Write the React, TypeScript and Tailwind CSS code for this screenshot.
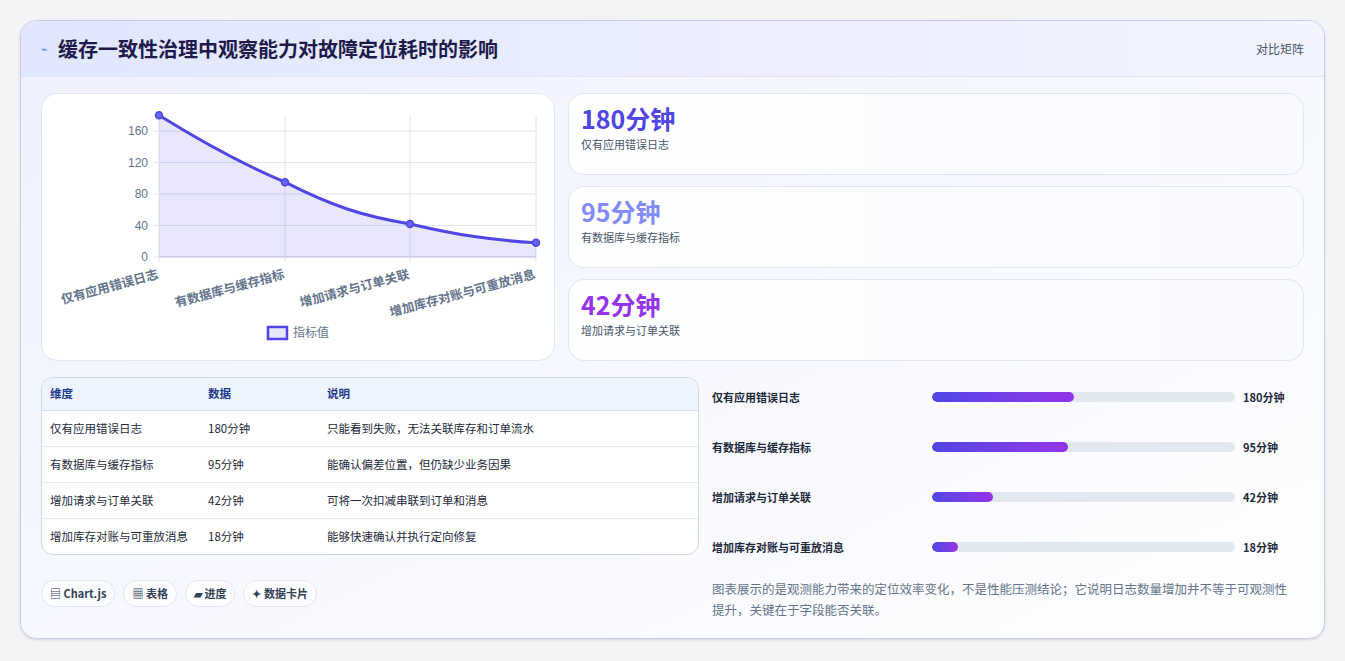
import React from "react";

const rows = [
  { k: "仅有应用错误日志", v: 180, d: "只能看到失败，无法关联库存和订单流水", w: 47 },
  { k: "有数据库与缓存指标", v: 95, d: "能确认偏差位置，但仍缺少业务因果", w: 45 },
  { k: "增加请求与订单关联", v: 42, d: "可将一次扣减串联到订单和消息", w: 20 },
  { k: "增加库存对账与可重放消息", v: 18, d: "能够快速确认并执行定向修复", w: 8.5 },
];

function Chart() {
  const xs = [117, 243, 368, 494];
  const y = (v: number) => 163 - v * 0.7875;
  const pts = rows.map((r, i) => [xs[i], y(r.v)]);
  const path = `M${pts[0][0]},${pts[0][1]} C160,48 200,70 ${pts[1][0]},${pts[1][1]} C290,112 320,122 ${pts[2][0]},${pts[2][1]} C420,142 450,146 ${pts[3][0]},${pts[3][1]}`;
  return (
    <svg width="513" height="267" className="block">
      {[0, 40, 80, 120, 160].map((t) => (
        <g key={t}>
          <line x1={112} x2={494} y1={y(t)} y2={y(t)} stroke="#e2e4f0" />
          <text x={106} y={y(t) + 4} textAnchor="end" fontSize="12" fill="#64748b" fontFamily="Liberation Sans, sans-serif">{t}</text>
        </g>
      ))}
      {xs.map((x) => (
        <line key={x} x1={x} x2={x} y1={22} y2={168} stroke="#e2e4f0" />
      ))}
      <line x1={117} x2={494} y1={163} y2={163} stroke="#cbd0e0" />
      <path d={`${path} L494,163 L117,163 Z`} fill="rgba(79,70,229,0.13)" />
      <path d={path} fill="none" stroke="#4f46e5" strokeWidth="3" />
      {pts.map(([a, b], i) => (
        <circle key={i} cx={a} cy={b} r="3.5" fill="#6366f1" stroke="#4f46e5" strokeWidth="1.5" />
      ))}
      {rows.map((r, i) => (
        <text key={i} transform={`translate(${xs[i]},${184}) rotate(-15)`} textAnchor="end" fontSize="12.5" fontWeight="bold" fill="#64748b" fontFamily="'Noto Sans CJK SC', sans-serif">{r.k}</text>
      ))}
      <rect x={226} y={233} width={19} height={12} fill="rgba(79,70,229,0.13)" stroke="#4f46e5" strokeWidth="2.5" />
      <text x={251} y={243} fontSize="12" fill="#64748b" fontFamily="'Noto Sans CJK SC', sans-serif">指标值</text>
    </svg>
  );
}

export default function App() {
  const stats = [
    { n: "180分钟", l: "仅有应用错误日志", c: "text-[#4f46e5]" },
    { n: "95分钟", l: "有数据库与缓存指标", c: "text-[#818cf8]" },
    { n: "42分钟", l: "增加请求与订单关联", c: "text-[#9333ea]" },
  ];
  return (
    <div className="w-[1345px] h-[661px] bg-[#f3f4f6] p-5 pb-0" style={{ fontFamily: "'Noto Sans CJK SC', 'Noto Sans', sans-serif" }}>
      <div className="h-[619px] rounded-2xl border border-[#c7cdf0] bg-gradient-to-br from-[#eef0fe] to-white overflow-hidden shadow-sm">
        <div className="h-[56px] flex items-center justify-between px-5 bg-gradient-to-r from-[#e0e7ff] to-[#f3f4ff] border-b border-[#e0e4f5]">
          <div className="flex items-center gap-2.5">
            <span className="text-[11px] text-[#3b82f6]">⌁</span>
            <span className="text-[20px] font-bold text-[#1e1b4b]">缓存一致性治理中观察能力对故障定位耗时的影响</span>
          </div>
          <span className="text-xs text-[#475569]">对比矩阵</span>
        </div>
        <div className="px-5 pt-[16px]">
          <div className="flex gap-[13px]">
            <div className="w-[514px] h-[268px] bg-white rounded-2xl border border-[#e2e6f3]"><Chart /></div>
            <div className="flex-1 flex flex-col gap-[11px]">
              {stats.map((s) => (
                <div key={s.n} className="h-[82px] rounded-2xl border border-[#e2e6f3] bg-gradient-to-r from-white to-[#f8faff] px-3 pt-2">
                  <div className={`text-[25px] font-bold leading-[32px] ${s.c}`}>{s.n}</div>
                  <div className="text-[11px] text-[#475569] mt-0.5">{s.l}</div>
                </div>
              ))}
            </div>
          </div>
          <div className="flex gap-[13px] mt-[16px]">
            <div className="w-[658px]">
              <div className="rounded-xl border border-[#cfd6e6] overflow-hidden bg-white text-[11.5px] text-[#1e293b]">
                <div className="flex h-[33px] items-center bg-[#eef4ff] font-bold text-[#1e3a8a] border-b border-[#d8e0ee]">
                  <div className="w-[166px] pl-2">维度</div><div className="w-[119px]">数据</div><div className="flex-1">说明</div>
                </div>
                {rows.map((r, i) => (
                  <div key={i} className={`flex py-[9px] leading-[17px] ${i < 3 ? "border-b border-[#e5e9f2]" : ""}`}>
                    <div className="w-[166px] pl-2 pr-[20px]">{r.k}</div><div className="w-[119px]">{r.v}分钟</div><div className="flex-1">{r.d}</div>
                  </div>
                ))}
              </div>
              <div className="flex gap-2 mt-[25px] text-[11px] font-bold text-[#334155]">
                {["▤ Chart.js", "▦ 表格", "▰ 进度", "✦ 数据卡片"].map((t) => (
                  <span key={t} className="h-[27px] px-2 flex items-center rounded-full border border-[#e2e6f0] bg-white/70">{t}</span>
                ))}
              </div>
            </div>
            <div className="flex-1 -mt-[5px]">
              <div className="flex flex-col">
                {rows.map((r, i) => (
                  <div key={i} className="h-[50px] flex items-center text-[11px] font-bold text-[#1e293b]">
                    <div className="w-[220px]">{r.k}</div>
                    <div className="w-[303px] h-[10px] rounded-full bg-[#e2e8f0] overflow-hidden">
                      <div className="h-full rounded-full bg-gradient-to-r from-[#4f46e5] to-[#9333ea]" style={{ width: `${r.w}%` }} />
                    </div>
                    <div className="ml-2">{r.v}分钟</div>
                  </div>
                ))}
              </div>
              <p className="mt-[6px] text-[12.5px] leading-[21px] text-[#64748b] pr-4">图表展示的是观测能力带来的定位效率变化，不是性能压测结论；它说明日志数量增加并不等于可观测性提升，关键在于字段能否关联。</p>
            </div>
          </div>
        </div>
      </div>
    </div>
  );
}
